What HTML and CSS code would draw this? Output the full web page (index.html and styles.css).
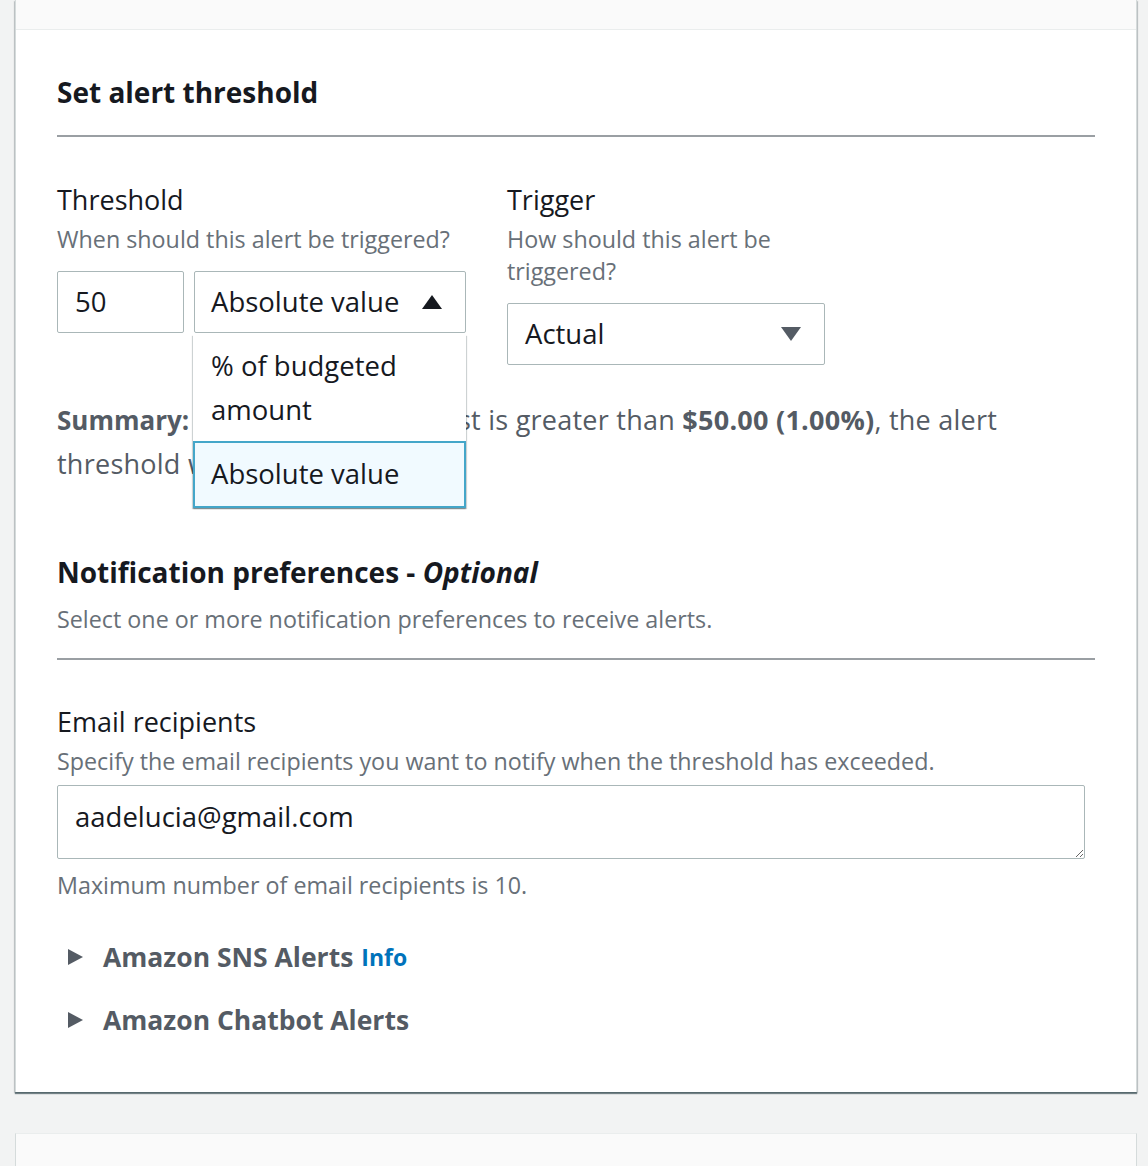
FILE: index.html
```html
<!DOCTYPE html>
<html lang="en">
<head>
<meta charset="utf-8">
<title>Set alert threshold</title>
<link rel="stylesheet" href="styles.css">
</head>
<body>
<div class="page">
  <section class="card">
    <div class="card-top"></div>
    <div class="card-body">
      <h2 class="section-title">Set alert threshold</h2>
      <hr class="divider">
      <div class="form-row">
        <div class="field">
          <div class="label">Threshold</div>
          <div class="helper">When should this alert be triggered?</div>
          <div class="controls">
            <div class="input num">50</div>
            <div class="select-wrap">
              <div class="input select open">
                <span>Absolute value</span>
                <svg class="caret" width="20" height="14" viewBox="0 0 20 14"><path d="M10 0 L20 14 L0 14 Z" fill="#16191f"/></svg>
              </div>
              <ul class="dropdown">
                <li class="option">% of budgeted amount</li>
                <li class="option selected">Absolute value</li>
              </ul>
            </div>
          </div>
        </div>
        <div class="field">
          <div class="label">Trigger</div>
          <div class="helper">How should this alert be triggered?</div>
          <div class="controls">
            <div class="input select wide">
              <span>Actual</span>
              <svg class="caret" width="20" height="14" viewBox="0 0 20 14"><path d="M0 0 L20 0 L10 14 Z" fill="#545b64"/></svg>
            </div>
          </div>
        </div>
      </div>
      <p class="summary"><b>Summary:</b> When your actual cost is greater than <b class="amt">$50.00 (1.00%)</b>, the alert threshold will be reached.</p>

      <h2 class="section-title notif">Notification preferences - <i>Optional</i></h2>
      <div class="helper sub">Select one or more notification preferences to receive alerts.</div>
      <hr class="divider second">

      <div class="label email-label">Email recipients</div>
      <div class="helper">Specify the email recipients you want to notify when the threshold has exceeded.</div>
      <textarea class="textarea" rows="1">aadelucia@gmail.com</textarea>
      <div class="helper note">Maximum number of email recipients is 10.</div>

      <div class="expander first">
        <svg class="tri" width="15" height="16" viewBox="0 0 15 16"><path d="M0 0 L15 8 L0 16 Z" fill="#545b64"/></svg>
        <span class="exp-title">Amazon SNS Alerts</span>
        <a class="info">Info</a>
      </div>
      <div class="expander">
        <svg class="tri" width="15" height="16" viewBox="0 0 15 16"><path d="M0 0 L15 8 L0 16 Z" fill="#545b64"/></svg>
        <span class="exp-title">Amazon Chatbot Alerts</span>
      </div>
    </div>
  </section>
  <section class="card next">
    <div class="card-top tall"></div>
  </section>
</div>
</body>
</html>
```

FILE: styles.css
```css
html, body {
  margin: 0;
  padding: 0;
}
body {
  background: #f2f3f3;
  font-family: "Open Sans", "Noto Sans", sans-serif;
  color: #16191f;
  overflow: hidden;
}
.page {
  padding: 0 11px 0 15px;
}
.card {
  background: #fff;
  border-left: 1px solid #d5dbdb;
  border-right: 1px solid #d5dbdb;
  box-shadow: 0 2px 1px 0 rgba(0, 28, 36, 0.5), 1px 1px 1px 0 rgba(0, 28, 36, 0.15), -1px 1px 1px 0 rgba(0, 28, 36, 0.15);
}
.card-top {
  height: 29px;
  background: #fafafa;
  border-bottom: 1px solid #eaeded;
}
.card-body {
  padding: 44px 41px 56px 41px;
}
.card.next {
  margin-top: 41px;
  border-top: 1px solid #eaeded;
  box-shadow: none;
}
.card-top.tall {
  height: 60px;
  border-bottom: none;
}
.section-title {
  margin: 0;
  font-size: 28px;
  line-height: 36px;
  font-weight: 700;
  color: #16191f;
}
.section-title i {
  font-weight: 700;
}
.divider {
  margin: 25px 0 0 0;
  border: 0;
  height: 2px;
  background: #9a9fa3;
}
.form-row {
  margin-top: 47px;
  display: grid;
  grid-template-columns: 430px 318px;
  column-gap: 20px;
  align-items: start;
}
.label {
  font-size: 27px;
  line-height: 32px;
  color: #16191f;
}
.helper {
  margin-top: 7px;
  font-size: 23.3px;
  line-height: 32px;
  color: #687078;
}
.controls {
  margin-top: 16px;
  display: flex;
  gap: 10px;
}
.input {
  box-sizing: border-box;
  height: 62px;
  border: 1px solid #aab7b8;
  border-radius: 2px;
  font-size: 27.5px;
  line-height: 60px;
  color: #16191f;
  background: #fff;
}
.num {
  width: 127px;
  padding-left: 17px;
}
.select-wrap {
  position: relative;
  width: 272px;
}
.select {
  display: flex;
  align-items: center;
  justify-content: space-between;
  padding: 0 23px 0 16px;
}
.wide {
  width: 318px;
  padding-left: 17px;
}
.dropdown {
  position: absolute;
  top: 64px;
  left: -1px;
  width: 273px;
  box-sizing: border-box;
  margin: 0;
  padding: 0;
  list-style: none;
  background: #fff;
  box-shadow: 0 1px 1px 0 rgba(0, 28, 36, 0.3), 1px 1px 1px 0 rgba(0, 28, 36, 0.15), -1px 1px 1px 0 rgba(0, 28, 36, 0.15);
  z-index: 5;
}
.option {
  font-size: 27.5px;
  line-height: 44px;
  padding: 9px 18px 9px 18px;
  color: #16191f;
}
.option.selected {
  border: 2px solid #44a6c9;
  background: #f1faff;
  padding: 9px 16px 10px 16px;
  line-height: 44px;
}
.summary {
  margin: 33px 0 0 0;
  font-size: 27px;
  letter-spacing: 0.25px;
  line-height: 44px;
  color: #545b64;
}
.summary b {
  font-weight: 700;
}
.summary b:first-child {
  font-size: 26px;
  letter-spacing: 0;
}
.notif {
  margin-top: 68px;
}
.sub {
  margin-top: 13px;
}
.divider.second {
  margin-top: 23px;
}
.email-label {
  margin-top: 46px;
}
.textarea {
  display: block;
  box-sizing: border-box;
  margin-top: 8px;
  width: 1028px;
  height: 74px;
  padding: 15px 17px;
  border: 1px solid #aab7b8;
  border-radius: 2px;
  font-family: inherit;
  font-size: 27.5px;
  line-height: 32px;
  color: #16191f;
  resize: vertical;
  outline: none;
}
.note {
  margin-top: 10px;
}
.expander {
  display: flex;
  align-items: center;
  margin-top: 31px;
  height: 32px;
  padding-left: 11px;
}
.expander.first {
  margin-top: 40px;
}
.tri {
  flex: none;
  margin-right: 20px;
}
.exp-title {
  font-size: 26.5px;
  line-height: 32px;
  font-weight: 700;
  color: #545b64;
}
.info {
  margin-left: 8px;
  font-size: 23px;
  font-weight: 700;
  color: #0073bb;
}
```
